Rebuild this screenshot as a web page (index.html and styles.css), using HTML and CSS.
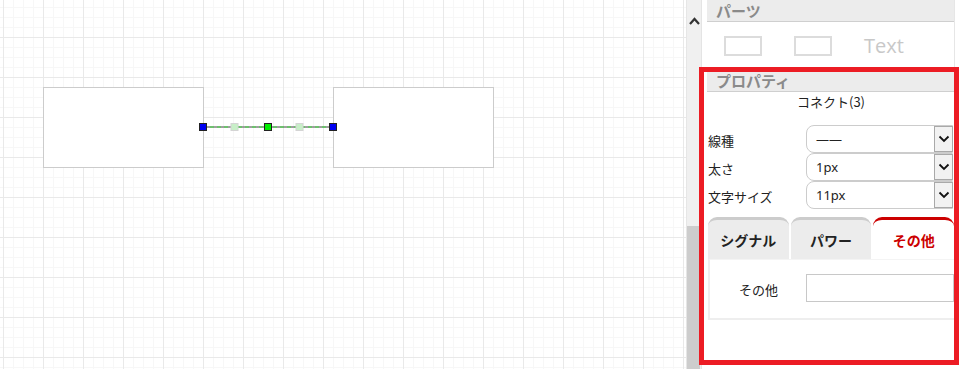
FILE: index.html
```html
<!DOCTYPE html>
<html lang="ja">
<head>
    <meta charset="UTF-8">
    <title>エディタ</title>
    <link rel="stylesheet" href="styles.css">
</head>
<body>

    <div class="editor">
        <div class="canvas">
            <div class="node node-1"></div>
            <div class="node node-2"></div>
            <svg class="connector" width="140" height="12" viewBox="0 0 140 12">
                <line x1="5" y1="6" x2="135" y2="6" stroke="#808080" stroke-width="1.6"/>
                <line x1="5" y1="6" x2="135" y2="6" stroke="#3ee03e" stroke-width="1.2" stroke-dasharray="4 3"/>
                <rect x="33" y="2.5" width="7" height="7" fill="#c8efc8" stroke="#d4d4d4"/>
                <rect x="98" y="2.5" width="7" height="7" fill="#c8efc8" stroke="#d4d4d4"/>
                <rect x="1.5" y="2.5" width="7" height="7" fill="#0000f0" stroke="#222"/>
                <rect x="131.5" y="2.5" width="7" height="7" fill="#0000f0" stroke="#222"/>
                <rect x="66.5" y="2.5" width="7" height="7" fill="#00ee00" stroke="#222"/>
            </svg>
        </div>

        <div class="scrollbar">
            <div class="scroll-track">
                <svg class="scroll-arrow" width="11" height="8" viewBox="0 0 11 8">
                    <path d="M1 7 L5.5 2 L10 7" fill="none" stroke="#333" stroke-width="2.2"/>
                </svg>
            </div>
            <div class="scroll-thumb"></div>
        </div>

        <div class="sidebar">
            <div class="section parts">
                <div class="section-header">パーツ</div>
                <div class="parts-body">
                    <div class="part-box"></div>
                    <div class="part-box"></div>
                    <div class="part-text">Text</div>
                </div>
            </div>

            <div class="section props">
                <div class="section-header">プロパティ</div>
                <div class="props-body">
                    <div class="props-title">コネクト(3)</div>

                    <div class="prop-row">
                        <label class="prop-label">線種</label>
                        <div class="select">
                            <span class="select-value">——</span>
                            <span class="select-arrow"><svg width="12" height="8" viewBox="0 0 12 8"><path d="M1.5 1.5 L6 6 L10.5 1.5" fill="none" stroke="#111" stroke-width="1.8"/></svg></span>
                        </div>
                    </div>
                    <div class="prop-row">
                        <label class="prop-label">太さ</label>
                        <div class="select">
                            <span class="select-value">1px</span>
                            <span class="select-arrow"><svg width="12" height="8" viewBox="0 0 12 8"><path d="M1.5 1.5 L6 6 L10.5 1.5" fill="none" stroke="#111" stroke-width="1.8"/></svg></span>
                        </div>
                    </div>
                    <div class="prop-row">
                        <label class="prop-label">文字サイズ</label>
                        <div class="select">
                            <span class="select-value">11px</span>
                            <span class="select-arrow"><svg width="12" height="8" viewBox="0 0 12 8"><path d="M1.5 1.5 L6 6 L10.5 1.5" fill="none" stroke="#111" stroke-width="1.8"/></svg></span>
                        </div>
                    </div>

                    <div class="tabs">
                        <div class="tab">シグナル</div>
                        <div class="tab">パワー</div>
                        <div class="tab active">その他</div>
                    </div>
                    <div class="tab-content">
                        <label class="tab-label">その他</label>
                        <input class="text-input" type="text">
                    </div>
                </div>
            </div>

            <!-- Markierung -->
            <div class="highlight"></div>
        </div>
    </div>

</body>
</html>
```

FILE: styles.css
```css
* {
    margin: 0;
    padding: 0;
    box-sizing: border-box;
    font-family: "Noto Sans CJK JP", "Noto Sans", sans-serif;
}

body {
    width: 962px;
    height: 369px;
    overflow: hidden;
    background: #ffffff;
}

.editor {
    display: flex;
    height: 369px;
}

/* Zeichenfläche */
.canvas {
    position: relative;
    width: 686px;
    height: 369px;
    background-color: #ffffff;
    background-image:
        linear-gradient(to right, #e9e9e9 1px, transparent 1px),
        linear-gradient(to bottom, #e9e9e9 1px, transparent 1px),
        linear-gradient(to right, #f7f7f7 1px, transparent 1px),
        linear-gradient(to bottom, #f7f7f7 1px, transparent 1px);
    background-size: 40px 40px, 40px 40px, 10px 10px, 10px 10px;
    background-position: 3px 37px, 3px 37px, 3px 7px, 3px 7px;
}

.node {
    position: absolute;
    top: 87px;
    width: 161px;
    height: 81px;
    background: #ffffff;
    border: 1px solid #cccccc;
}

.node-1 {
    left: 43px;
}

.node-2 {
    left: 333px;
}

.connector {
    position: absolute;
    left: 198px;
    top: 121px;
}

/* Scrollbar */
.scrollbar {
    width: 15px;
    display: flex;
    flex-direction: column;
    background: #f0f0f0;
    border-left: 1px solid #e6e6e6;
}

.scroll-track {
    height: 226px;
    display: flex;
    justify-content: center;
    padding-top: 17px;
}

.scroll-thumb {
    flex: 1;
    margin: 0 1px 0 0;
    background: #cdcdcd;
}

/* Seitenleiste */
.sidebar {
    position: relative;
    width: 261px;
    padding: 0 7px 0 5px;
    border-left: 1px solid #e4e4e4;
}

.section {
    border-right: 1px solid #e6e6e6;
}

.section-header {
    height: 22px;
    padding-left: 9px;
    background: #ececec;
    border-bottom: 1px solid #cfcfcf;
    color: #8a8a8a;
    font-size: 15px;
    font-weight: 700;
    line-height: 21px;
}

.parts-body {
    height: 48px;
    display: flex;
    align-items: center;
    padding-left: 17px;
}

.part-box {
    width: 38px;
    height: 20px;
    border: 2px solid #dcdcdc;
    margin-right: 32px;
}

.part-text {
    color: #c8c8c8;
    font-family: "Open Sans", sans-serif;
    font-size: 20px;
    line-height: 20px;
}

.props-body {
    padding-left: 1px;
}

.props-title {
    text-align: center;
    color: #222;
    font-size: 13px;
    line-height: 20px;
    height: 33px;
}

.prop-row {
    display: flex;
    align-items: center;
    height: 28px;
}

.prop-label {
    width: 98px;
    color: #222;
    font-size: 13px;
    padding-top: 2px;
}

.select {
    display: flex;
    align-items: center;
    width: 147px;
    height: 28px;
    border: 1px solid #cccccc;
    border-radius: 8px 0 0 8px;
    background: #ffffff;
}

.select-value {
    flex: 1;
    padding-left: 9px;
    color: #222;
    font-size: 13px;
    font-family: "Noto Sans", sans-serif;
}

.select-arrow {
    width: 19px;
    height: 26px;
    margin-right: -1px;
    display: flex;
    align-items: center;
    justify-content: center;
    background: #f2f2f2;
    border: 1px solid #a9a9a9;
}

/* Tabs */
.tabs {
    display: flex;
    gap: 2px;
    margin-top: 8px;
    height: 42px;
}

.tab {
    flex: 1;
    display: flex;
    align-items: center;
    justify-content: center;
    background: #ececec;
    border-top: 3px solid #cccccc;
    border-radius: 9px 9px 0 0;
    color: #222;
    font-size: 14px;
    font-weight: 700;
}

.tab.active {
    background: #ffffff;
    border-top-color: #cc0000;
    color: #cc0000;
}

.tab-content {
    display: flex;
    align-items: center;
    height: 61px;
    border: 2px solid #eeeeee;
    border-top: 1px solid #f4f4f4;
    border-right: none;
}

.tab-label {
    width: 97px;
    padding-left: 29px;
    color: #222;
    font-size: 13px;
}

.text-input {
    width: 148px;
    height: 28px;
    border: 1px solid #c8c8c8;
    margin-top: -2px;
}

/* rote Markierung */
.highlight {
    position: absolute;
    left: -3px;
    top: 67px;
    width: 260px;
    height: 298px;
    border: 5px solid #ec1c24;
}
```
